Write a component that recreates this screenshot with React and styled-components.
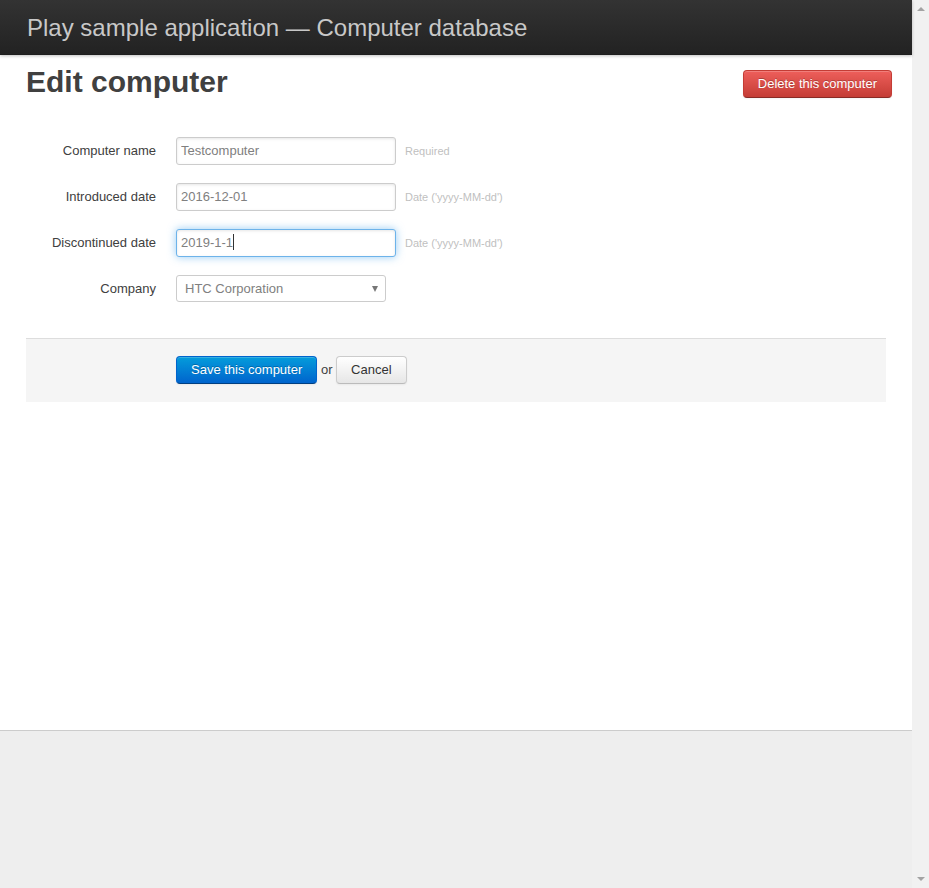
import React from "react";
import styled, { createGlobalStyle } from "styled-components";

const GlobalStyle = createGlobalStyle`
  html, body {
    margin: 0;
    padding: 0;
    height: 100%;
  }
  body {
    background: #eeeeee;
    font-family: "Liberation Sans", Arial, sans-serif;
    font-size: 13px;
    line-height: 18px;
    color: #404040;
    overflow: hidden;
  }
`;

const Screen = styled.div`
  display: flex;
  height: 888px;
`;

const Page = styled.div`
  flex: 1;
  min-width: 0;
`;

const Sheet = styled.div`
  background: #ffffff;
  height: 730px;
  border-bottom: 1px solid #cccccc;
`;

const Topbar = styled.header`
  height: 55px;
  background: linear-gradient(to bottom, #333333, #222222);
  box-shadow: 0 1px 3px rgba(0, 0, 0, 0.25), inset 0 -1px 0 rgba(0, 0, 0, 0.1);
  padding-left: 27px;
  position: relative;
`;

const Brand = styled.h1`
  margin: 0;
  font-size: 24px;
  line-height: 55px;
  font-weight: normal;
  color: #c8c8c8;
`;

const Content = styled.section`
  padding: 0 20px 0 26px;
`;

const TitleRow = styled.div`
  display: flex;
  justify-content: space-between;
  align-items: flex-start;
  padding-top: 9px;
`;

const Title = styled.h2`
  margin: 0;
  font-size: 30px;
  line-height: 36px;
  font-weight: bold;
  color: #404040;
`;

const Button = styled.button`
  font-family: inherit;
  font-size: 13px;
  line-height: 16px;
  padding: 5px 14px 5px;
  border-radius: 4px;
  cursor: pointer;
  border: 1px solid;
  box-shadow: inset 0 1px 0 rgba(255, 255, 255, 0.2), 0 1px 2px rgba(0, 0, 0, 0.05);
  ${({ $kind }) =>
    $kind === "danger"
      ? `
    color: #ffffff;
    background: linear-gradient(to bottom, #ee5f5b, #c43c35);
    border-color: #c43c35 #c43c35 #882a25;
    text-shadow: 0 -1px 0 rgba(0,0,0,0.25);
  `
      : $kind === "primary"
      ? `
    color: #ffffff;
    background: linear-gradient(to bottom, #049cdb, #0064cd);
    border-color: #0064cd #0064cd #003f81;
    text-shadow: 0 -1px 0 rgba(0,0,0,0.25);
  `
      : `
    color: #333333;
    background: linear-gradient(to bottom, #ffffff, #e6e6e6);
    border-color: #cccccc #cccccc #bbbbbb;
  `}
`;

const DeleteButton = styled(Button)`
  margin-top: 6px;
`;

const Form = styled.form`
  padding-top: 37px;
  margin: 0;
`;

const Field = styled.div`
  display: flex;
  align-items: center;
  margin-bottom: 18px;
`;

const Label = styled.label`
  width: 130px;
  text-align: right;
  padding-right: 20px;
  color: #404040;
  font-size: 13px;
  line-height: 18px;
`;

const InputWrap = styled.div`
  position: relative;
  display: flex;
`;

const TextInput = styled.input`
  box-sizing: border-box;
  width: 220px;
  height: 28px;
  padding: 3px 4px 5px;
  font-family: inherit;
  font-size: 13px;
  line-height: 18px;
  color: #808080;
  border: 1px solid ${({ $focus }) => ($focus ? "#6db3ea" : "#cccccc")};
  border-radius: 3px;
  outline: none;
  box-shadow: ${({ $focus }) =>
    $focus
      ? "inset 0 1px 3px rgba(0,0,0,0.1), 0 0 8px rgba(82,168,236,0.6)"
      : "inset 0 1px 3px rgba(0,0,0,0.1)"};
`;

const Caret = styled.span`
  position: absolute;
  left: 57px;
  top: 5px;
  width: 1px;
  height: 16px;
  background: #333333;
`;

const Select = styled.select`
  box-sizing: border-box;
  width: 210px;
  height: 27px;
  padding: 0 8px;
  font-family: inherit;
  font-size: 13px;
  color: #808080;
  background: #ffffff;
  border: 1px solid #cccccc;
  border-radius: 3px;
  appearance: none;
  -webkit-appearance: none;
  outline: none;
`;

const SelectArrow = styled.span`
  position: absolute;
  right: 8px;
  top: 11px;
  width: 0;
  height: 0;
  border-left: 3px solid transparent;
  border-right: 3px solid transparent;
  border-top: 6px solid #777777;
  pointer-events: none;
`;

const Help = styled.span`
  margin-left: 9px;
  font-size: 11px;
  color: #bfbfbf;
`;

const Actions = styled.div`
  margin: 36px 6px 0 0;
  padding: 17px 0 18px 150px;
  background: #f5f5f5;
  border-top: 1px solid #dddddd;
  color: #404040;
  font-size: 13px;
`;

const Scrollbar = styled.div`
  width: 17px;
  background: #f1f1f1;
  display: flex;
  flex-direction: column;
  justify-content: space-between;
  align-items: center;
  padding: 7px 0;
  box-sizing: border-box;
`;

const Arrow = styled.span`
  width: 0;
  height: 0;
  border-left: 4px solid transparent;
  border-right: 4px solid transparent;
  ${({ $down }) =>
    $down ? "border-top: 4px solid #a3a3a3;" : "border-bottom: 4px solid #a3a3a3;"}
`;

const fields = [
  { label: "Computer name", value: "Testcomputer", help: "Required" },
  { label: "Introduced date", value: "2016-12-01", help: "Date ('yyyy-MM-dd')" },
  { label: "Discontinued date", value: "2019-1-1", help: "Date ('yyyy-MM-dd')", focus: true },
];

export default function App() {
  return (
    <>
      <GlobalStyle />
      <Screen>
        <Page>
          <Sheet>
            <Topbar>
              <Brand>Play sample application — Computer database</Brand>
            </Topbar>
            <Content>
              <TitleRow>
                <Title>Edit computer</Title>
                <DeleteButton type="button" $kind="danger">
                  Delete this computer
                </DeleteButton>
              </TitleRow>
              <Form onSubmit={(e) => e.preventDefault()}>
                {fields.map((f) => (
                  <Field key={f.label}>
                    <Label>{f.label}</Label>
                    <InputWrap>
                      <TextInput type="text" value={f.value} readOnly $focus={f.focus} />
                      {f.focus && <Caret />}
                    </InputWrap>
                    <Help>{f.help}</Help>
                  </Field>
                ))}
                <Field>
                  <Label>Company</Label>
                  <InputWrap>
                    <Select defaultValue="htc">
                      <option value="htc">HTC Corporation</option>
                    </Select>
                    <SelectArrow />
                  </InputWrap>
                </Field>
                <Actions>
                  <Button type="submit" $kind="primary">
                    Save this computer
                  </Button>{" "}
                  or{" "}
                  <Button type="button">Cancel</Button>
                </Actions>
              </Form>
            </Content>
          </Sheet>
        </Page>
        <Scrollbar>
          <Arrow />
          <Arrow $down />
        </Scrollbar>
      </Screen>
    </>
  );
}
